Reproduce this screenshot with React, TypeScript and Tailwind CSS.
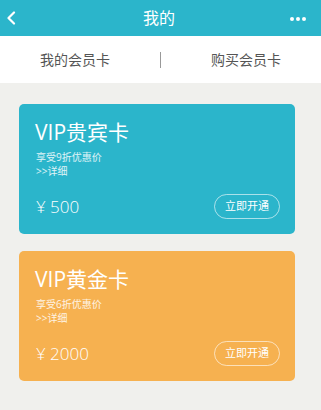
const FONT = { fontFamily: '"Open Sans", "Noto Sans CJK SC", sans-serif' };

interface Card {
  title: string;
  discount: string;
  price: string;
  color: string;
}

const cards: Card[] = [
  { title: "VIP贵宾卡", discount: "享受9折优惠价", price: "¥ 500", color: "bg-[#2bb5cb]" },
  { title: "VIP黄金卡", discount: "享受6折优惠价", price: "¥ 2000", color: "bg-[#f6b150]" },
];

function MemberCard({ card }: { card: Card }) {
  return (
    <div className={`${card.color} rounded-[5px] h-[130px] pl-4 pr-[15px] pt-[15px] pb-[15px] flex flex-col text-white`}>
      <p className="text-[21px] leading-[26px]">{card.title}</p>
      <p className="mt-[5px] text-[10px] leading-[14px] text-white/85 pl-[1px]">{card.discount}</p>
      <p className="text-[10px] leading-[14px] text-white/85 pl-[1px]">&gt;&gt;详细</p>
      <div className="mt-auto flex items-center justify-between">
        <span className="text-[17px] font-light pl-[1px]">{card.price}</span>
        <button className="w-[66px] h-[25px] rounded-full border border-white/60 text-[11px] text-white">
          立即开通
        </button>
      </div>
    </div>
  );
}

export default function App() {
  return (
    <div className="w-[321px] h-[410px] bg-[#f0f0ed] overflow-hidden" style={FONT}>
      {/* 顶部导航 */}
      <div className="h-[36px] bg-[#2bb5cb] flex items-center justify-between px-[6px] text-white">
        <svg width="10" height="14" viewBox="0 0 10 14" fill="none">
          <path d="M8 1.5L2.5 7L8 12.5" stroke="white" strokeWidth="2.2" strokeLinecap="round" strokeLinejoin="round" />
        </svg>
        <span className="text-[16px] ml-[12px]">我的</span>
        <div className="flex gap-[2px] pr-[9px] pt-[1px]">
          <span className="w-[4px] h-[4px] rounded-full bg-white" />
          <span className="w-[4px] h-[4px] rounded-full bg-white" />
          <span className="w-[4px] h-[4px] rounded-full bg-white" />
        </div>
      </div>

      {/* 标签栏 */}
      <div className="h-[47px] bg-white flex items-center text-[14px] text-[#555]">
        <div className="flex-1 text-center">我的会员卡</div>
        <div className="w-px h-[16px] mx-[10px] bg-[#999]" />
        <div className="flex-1 text-center">购买会员卡</div>
      </div>

      {/* 会员卡列表 */}
      <div className="pl-[19px] pr-[26px] pt-[21px] flex flex-col gap-[17px]">
        {cards.map((c) => (
          <MemberCard key={c.title} card={c} />
        ))}
      </div>
    </div>
  );
}
